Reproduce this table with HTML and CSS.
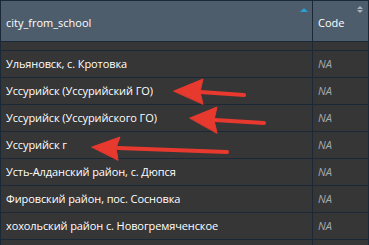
FILE: index.html
```html
<!DOCTYPE html>
<html>
<head>
<meta charset="utf-8">
<link rel="stylesheet" href="styles.css">
</head>
<body>
<div class="table">
  <div class="head">
    <div class="th city">city_from_school<span class="sort asc"></span></div>
    <div class="th code">Code<span class="sort both"><i class="up"></i><i class="down"></i></span></div>
  </div>
  <div class="body">
    <div class="rows">
      <div class="row partial"><div class="td city"></div><div class="td code"></div></div>
      <div class="row"><div class="td city">Ульяновск, с. Кротовка</div><div class="td code">NA</div></div>
      <div class="row"><div class="td city">Уссурийск (Уссурийский ГО)</div><div class="td code">NA</div></div>
      <div class="row"><div class="td city">Уссурийск (Уссурийского ГО)</div><div class="td code">NA</div></div>
      <div class="row"><div class="td city">Уссурийск г</div><div class="td code">NA</div></div>
      <div class="row"><div class="td city">Усть-Алданский район, с. Дюпся</div><div class="td code">NA</div></div>
      <div class="row"><div class="td city">Фировский район, пос. Сосновка</div><div class="td code">NA</div></div>
      <div class="row"><div class="td city">хохольский район с. Новогремяченское</div><div class="td code">NA</div></div>
      <div class="row"><div class="td city"></div><div class="td code"></div></div>
    </div>
  </div>
  <svg class="arrows" width="369" height="245" viewBox="0 0 369 245">
    <g fill="#e8392f" stroke="#e8392f" stroke-linecap="round" stroke-linejoin="round">
      <line x1="200" y1="92" x2="244" y2="95" stroke-width="4"/>
      <polygon points="174,91 203,79 200,92 203,104" stroke-width="1"/>
      <line x1="215" y1="120" x2="264" y2="123" stroke-width="4"/>
      <polygon points="190,118 217,107 214,120 217,133" stroke-width="1"/>
      <line x1="118" y1="148" x2="227" y2="152" stroke-width="4"/>
      <polygon points="92,147 120,137 116,148 118,160" stroke-width="1"/>
    </g>
  </svg>
</div>
</body>
</html>
```

FILE: styles.css
```css
html, body {
  margin: 0;
  padding: 0;
  background: #2b3e50;
}
body {
  width: 369px;
  height: 245px;
  overflow: hidden;
  font-family: "Open Sans", Roboto, sans-serif;
  font-size: 11px;
  color: #ffffff;
}
.table {
  position: relative;
  width: 369px;
  height: 245px;
  overflow: hidden;
  background: #363636;
}
.head {
  display: grid;
  grid-template-columns: 312px 56px;
  background: #4e5d6c;
  border-top: 1px solid #1b2838;
  border-left: 1px solid #1b2838;
  border-bottom: 1px solid #1b2838;
  height: 40px;
}
.th {
  position: relative;
  display: flex;
  align-items: center;
  padding-left: 5px;
  padding-top: 3px;
  border-right: 1px solid #1b2838;
}
.sort {
  position: absolute;
}
.sort.asc {
  right: 4px;
  top: 7px;
  width: 0;
  height: 0;
  border-left: 4px solid transparent;
  border-right: 4px solid transparent;
  border-bottom: 4px solid #2a9fd6;
}
.sort.both {
  right: 5px;
  top: 5px;
  display: flex;
  flex-direction: column;
  gap: 1px;
}
.sort.both i {
  display: block;
  width: 0;
  height: 0;
  border-left: 3px solid transparent;
  border-right: 3px solid transparent;
}
.sort.both .up { border-bottom: 3px solid #a9b2bb; }
.sort.both .down { border-top: 3px solid #a9b2bb; }
.body {
  height: 203px;
  overflow: hidden;
}
.rows {
  margin-top: -18px;
}
.row {
  display: grid;
  grid-template-columns: 312px 56px;
  height: 26px;
  border-bottom: 1px solid #1b2838;
  border-left: 1px solid #1b2838;
}
.td {
  display: flex;
  align-items: center;
  padding-left: 5px;
  padding-bottom: 2px;
  border-right: 1px solid #1b2838;
  white-space: nowrap;
  overflow: hidden;
  letter-spacing: -0.1px;
}
.td.code {
  font-style: italic;
  color: #a2abb5;
}
.arrows {
  position: absolute;
  left: 0;
  top: 0;
}
```
